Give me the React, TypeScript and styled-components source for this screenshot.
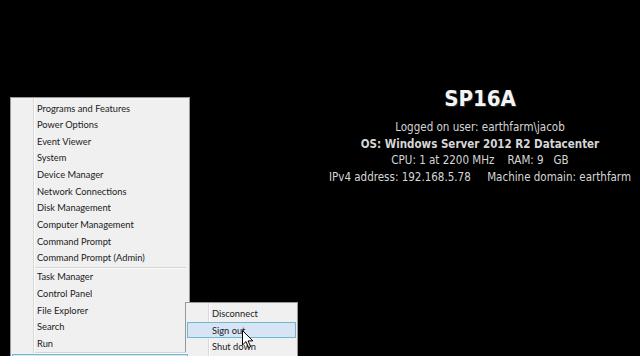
import React from "react";
import styled, { createGlobalStyle } from "styled-components";

const Global = createGlobalStyle`
  html, body { margin: 0; padding: 0; background: #000; }
  #root { width: 640px; height: 356px; overflow: hidden; }
`;

const Screen = styled.div`
  position: relative;
  width: 640px;
  height: 356px;
  background: #000;
  display: flex;
  align-items: flex-start;
  overflow: hidden;
`;

const Menu = styled.div<{ $w: number }>`
  box-sizing: border-box;
  width: ${(p) => p.$w}px;
  background: #f0f0f0;
  border: 1px solid #979797;
  padding: 1.5px 1px 0 1px;
  position: relative;
  font-family: "Lato", "Noto Sans", sans-serif;
  font-size: 9.3px;
  color: #1a1a1a;
  &::before {
    content: "";
    position: absolute;
    top: 0;
    bottom: 0;
    left: 22px;
    width: 1px;
    background: #d9d9d9;
    box-shadow: 1px 0 0 #fcfcfc;
  }
`;

const MainMenu = styled(Menu)`
  margin-left: 10px;
  margin-top: 97px;
  height: 300px;
`;

const Flyout = styled(Menu)`
  position: absolute;
  left: 185px;
  top: 302px;
  height: 80px;
  padding-top: 2px;
`;

const Item = styled.div<{ $active?: boolean }>`
  position: relative;
  z-index: 1;
  box-sizing: border-box;
  height: 16.67px;
  line-height: 15px;
  padding-left: 24px;
  white-space: nowrap;
  border: 1px solid ${(p) => (p.$active ? "#6fb9d3" : "transparent")};
  background: ${(p) => (p.$active ? "#d6e4f4" : "transparent")};
`;

const Separator = styled.div`
  position: relative;
  z-index: 1;
  height: 1px;
  margin: 0.6px 2px 0.8px 23px;
  background: #d4d4d4;
  box-shadow: 0 1px 0 #fafafa;
`;

const Info = styled.div`
  margin-left: 130px;
  margin-top: 86px;
  width: 320px;
  text-align: center;
  font-family: "DejaVu Sans Condensed", "DejaVu Sans", sans-serif;
  font-size: 11.5px;
  color: #d6d6d6;
  display: flex;
  flex-direction: column;
  align-items: center;
`;

const Title = styled.div`
  font-size: 22px;
  font-weight: bold;
  color: #f4f4f4;
  line-height: 26px;
  margin-bottom: 7px;
  text-shadow: 1px 1px 1px #333;
`;

const Line = styled.div<{ $bold?: boolean }>`
  line-height: 16.7px;
  white-space: pre;
  font-weight: ${(p) => (p.$bold ? "bold" : "normal")};
`;

const Cursor = styled.svg`
  position: absolute;
  left: 242px;
  top: 330px;
  z-index: 5;
`;

const top = [
  "Programs and Features",
  "Power Options",
  "Event Viewer",
  "System",
  "Device Manager",
  "Network Connections",
  "Disk Management",
  "Computer Management",
  "Command Prompt",
  "Command Prompt (Admin)",
];
const bottom = ["Task Manager", "Control Panel", "File Explorer", "Search", "Run"];

export default function App() {
  return (
    <Screen>
      <Global />
      <MainMenu $w={180}>
        {top.map((t) => (
          <Item key={t}>{t}</Item>
        ))}
        <Separator />
        {bottom.map((t) => (
          <Item key={t}>{t}</Item>
        ))}
        <Separator />
        <Item $active aria-label="Shut down or sign out" />
      </MainMenu>
      <Info>
        <Title>SP16A</Title>
        <Line>Logged on user: earthfarm\jacob</Line>
        <Line $bold>OS: Windows Server 2012 R2 Datacenter</Line>
        <Line>{"CPU: 1 at 2200 MHz    RAM: 9   GB"}</Line>
        <Line>{"IPv4 address: 192.168.5.78     Machine domain: earthfarm"}</Line>
      </Info>
      <Flyout $w={113}>
        <Item>Disconnect</Item>
        <Item $active>Sign out</Item>
        <Item>Shut down</Item>
      </Flyout>
      <Cursor width="12" height="19" viewBox="0 0 12 19">
        <path
          d="M0.5 0.5 L0.5 15 L4 11.6 L6.6 17.6 L8.6 16.7 L6.1 10.9 L10.8 10.9 Z"
          fill="#fff"
          stroke="#000"
          strokeWidth="1"
          strokeLinejoin="round"
        />
      </Cursor>
    </Screen>
  );
}
